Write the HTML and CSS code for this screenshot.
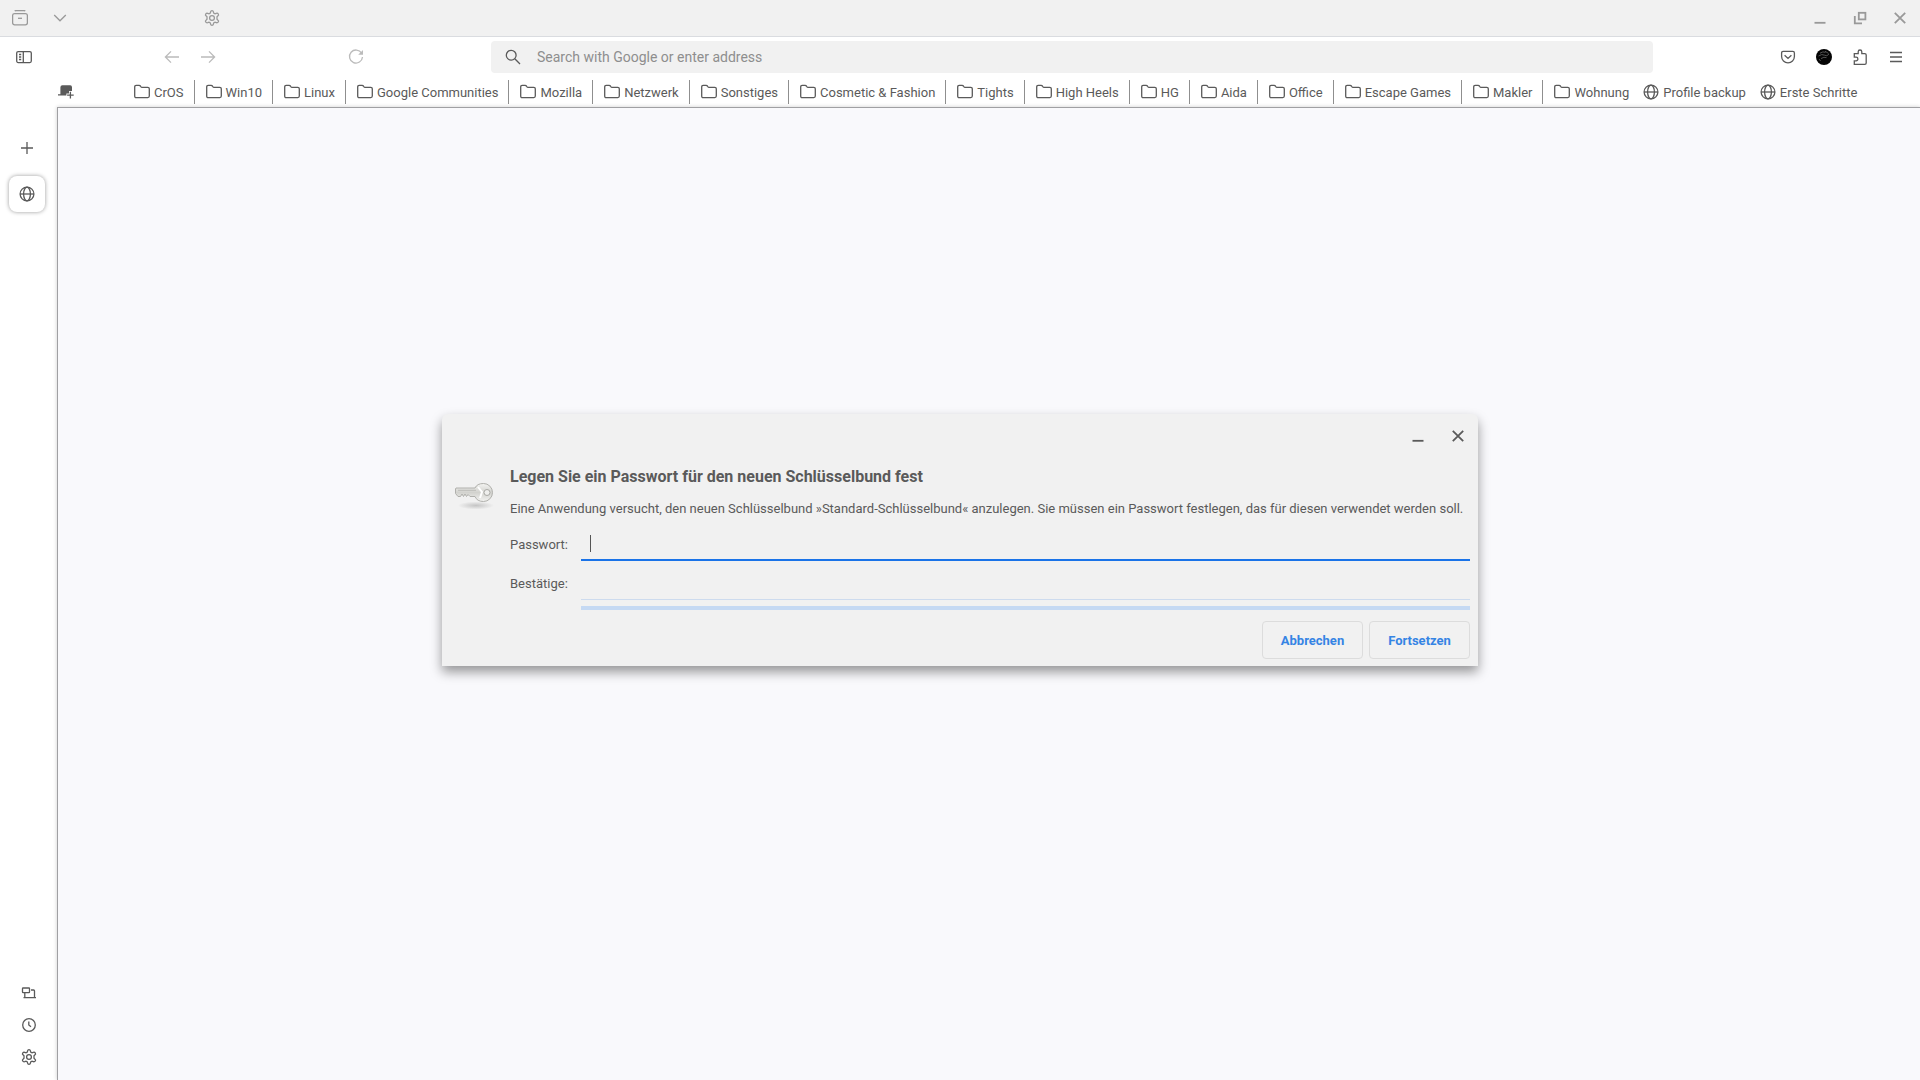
FILE: index.html
```html
<!DOCTYPE html>
<html lang="de">
<head>
    <meta charset="UTF-8">
    <title>Neuer Schlüsselbund</title>
    <meta name="viewport" content="width=device-width, initial-scale=1.0">
    <link rel="stylesheet" href="styles.css">
</head>
<body>
<!-- Shared icons -->
<svg class="sprite" xmlns="http://www.w3.org/2000/svg">
    <symbol id="folder" viewBox="0 0 16 16">
        <path d="M.7 12.1V2.9Q.7 1.3 2.2 1.3H5.1Q5.9 1.3 6.4 2L7 2.9Q7.3 3.3 7.9 3.3H13.8Q15.3 3.3 15.3 4.8V12.1Q15.3 13.6 13.8 13.6H2.2Q.7 13.6 .7 12.1Z" />
    </symbol>
    <symbol id="globe" viewBox="0 0 16 16">
        <circle cx="8" cy="8" r="6.9" />
        <ellipse cx="8" cy="8" rx="3.4" ry="6.9" />
        <path d="M1 8H15" />
    </symbol>
    <symbol id="gear" viewBox="0 0 16 16">
        <path d="M6.6 1.8Q6.8.7 8 .7T9.4 1.8L9.7 3.1 11 3.8 12.3 3.3Q13.6 2.9 14.3 4T14 5.8L13 6.7V9.3L14 10.2Q15 11 14.3 12T12.3 12.7L11 12.2 9.7 12.9 9.4 14.2Q9.2 15.3 8 15.3T6.6 14.2L6.3 12.9 5 12.2 3.7 12.7Q2.4 13.1 1.7 12T2 10.2L3 9.3V6.7L2 5.8Q1 5 1.7 4T3.7 3.3L5 3.8 6.3 3.1Z" />
        <circle cx="8" cy="8" r="2.4" />
    </symbol>
    <symbol id="minimize" viewBox="0 0 16 16">
        <path d="M2.5 12.8H13.5" />
    </symbol>
    <symbol id="close" viewBox="0 0 16 16">
        <path d="M2.8 2.8 13.2 13.2M13.2 2.8 2.8 13.2" />
    </symbol>
</svg>

<header class="titlebar">
    <button class="tool" aria-label="Firefox View">
        <svg class="icon" viewBox="0 0 16 16"><path d="M2.8 1.2Q3.2.6 4 .6H12Q12.8.6 13.2 1.2" /><rect x=".6" y="3.6" width="14.8" height="11.2" rx="2" /><path d="M6 8.3H10" /></svg>
    </button>
    <button class="tool" aria-label="List all tabs">
        <svg class="icon" viewBox="0 0 16 16"><path d="M2.2 5 8 10.8 13.8 5" /></svg>
    </button>
    <span class="spring"></span>
    <button class="tool" aria-label="Settings">
        <svg class="icon"><use href="#gear" /></svg>
    </button>
    <div class="window-controls">
        <button class="tool" aria-label="Minimize"><svg class="icon bold"><use href="#minimize" /></svg></button>
        <button class="tool" aria-label="Restore">
            <svg class="icon bold" viewBox="0 0 16 16"><rect x="6.8" y="2.8" width="6.6" height="6.6" /><path d="M2.8 6V13.3H10" /></svg>
        </button>
        <button class="tool" aria-label="Close"><svg class="icon bold"><use href="#close" /></svg></button>
    </div>
</header>

<div class="toolbar">
    <button class="tool" aria-label="Sidebar">
        <svg class="icon" viewBox="0 0 16 16"><rect x=".7" y="2.6" width="14.6" height="11" rx="1.5" /><path d="M7.3 2.6V13.6M3 5.5H5.2M3 8H5.2M3 10.5H5.2" /></svg>
    </button>
    <span class="spring"></span>
    <button class="tool" aria-label="Back" disabled>
        <svg class="icon" viewBox="0 0 16 16"><path d="M1.5 8H15M7 2.4 1.4 8 7 13.6" /></svg>
    </button>
    <button class="tool" aria-label="Forward" disabled>
        <svg class="icon" viewBox="0 0 16 16"><path d="M14.5 8H1M9 2.4 14.6 8 9 13.6" /></svg>
    </button>
    <span class="spring"></span>
    <button class="tool" aria-label="Reload" disabled>
        <svg class="icon" viewBox="0 0 16 16"><path d="M13.6 4.2A6.5 6.5 0 1 0 14.5 8" /><path class="solid" d="M15 1V5.8H10.2Z" /></svg>
    </button>
    <label class="urlbar">
        <svg class="icon" viewBox="0 0 16 16"><circle cx="6.2" cy="6.2" r="4.9" /><path d="M9.8 9.8 15 15" /></svg>
        <input type="text" aria-label="Address" placeholder="Search with Google or enter address">
    </label>
    <button class="tool" aria-label="Pocket">
        <svg class="icon" viewBox="0 0 16 16"><path d="M1.6 3.9Q1.6 2.3 3.2 2.3H12.8Q14.4 2.3 14.4 3.9V7.6A6.4 6.2 0 0 1 1.6 7.6ZM4.6 6.2 8 9.4 11.4 6.2" /></svg>
    </button>
    <button class="tool" aria-label="Account">
        <svg class="avatar" viewBox="0 0 16 16"><circle cx="8" cy="8" r="8" /><path d="M4 4.2Q7 2 9.5 3.4M2.5 7Q6 4.5 8.5 6.2T13 5M5 9.6Q8 7.5 10.5 8.6M9 2.2 12.5 4.4M3 10 4.6 12" /></svg>
    </button>
    <button class="tool" aria-label="Extensions">
        <svg class="icon" viewBox="0 0 16 16"><path d="M2.3 15.3V11.8H4.1A1.7 1.7 0 0 0 4.1 8.2H2.3V4.7H6.2V2.8A1.8 1.8 0 0 1 9.8 2.8V4.7H12.8Q14.2 4.7 14.2 6.1V13.9Q14.2 15.3 12.8 15.3Z" /></svg>
    </button>
    <button class="tool" aria-label="Menu">
        <svg class="icon" viewBox="0 0 16 16"><path d="M2 3.5H14M2 8H14M2 12.5H14" /></svg>
    </button>
</div>

<nav class="bookmarks">
    <button class="add-page" aria-label="Add page">
        <svg class="icon" viewBox="0 0 16 16"><path class="solid" d="M2.4 3.2Q2.4 1.2 4.4 1.2H12.2Q14 1.2 14 3.2V7H11V9.4H8.4V11.4H0V10.2H2.4Z" /><path d="M12.4 7.8V14.4M9.1 11.1H15.7" /></svg>
    </button>
    <a class="bookmark" href="#"><svg class="icon"><use href="#folder" /></svg>CrOS</a>
    <a class="bookmark" href="#"><svg class="icon"><use href="#folder" /></svg>Win10</a>
    <a class="bookmark" href="#"><svg class="icon"><use href="#folder" /></svg>Linux</a>
    <a class="bookmark" href="#"><svg class="icon"><use href="#folder" /></svg>Google Communities</a>
    <a class="bookmark" href="#"><svg class="icon"><use href="#folder" /></svg>Mozilla</a>
    <a class="bookmark" href="#"><svg class="icon"><use href="#folder" /></svg>Netzwerk</a>
    <a class="bookmark" href="#"><svg class="icon"><use href="#folder" /></svg>Sonstiges</a>
    <a class="bookmark" href="#"><svg class="icon"><use href="#folder" /></svg>Cosmetic &amp; Fashion</a>
    <a class="bookmark" href="#"><svg class="icon"><use href="#folder" /></svg>Tights</a>
    <a class="bookmark" href="#"><svg class="icon"><use href="#folder" /></svg>High Heels</a>
    <a class="bookmark" href="#"><svg class="icon"><use href="#folder" /></svg>HG</a>
    <a class="bookmark" href="#"><svg class="icon"><use href="#folder" /></svg>Aida</a>
    <a class="bookmark" href="#"><svg class="icon"><use href="#folder" /></svg>Office</a>
    <a class="bookmark" href="#"><svg class="icon"><use href="#folder" /></svg>Escape Games</a>
    <a class="bookmark" href="#"><svg class="icon"><use href="#folder" /></svg>Makler</a>
    <a class="bookmark last" href="#"><svg class="icon"><use href="#folder" /></svg>Wohnung</a>
    <a class="bookmark page" href="#"><svg class="icon"><use href="#globe" /></svg>Profile backup</a>
    <a class="bookmark page" href="#"><svg class="icon"><use href="#globe" /></svg>Erste Schritte</a>
</nav>

<div class="browser">
    <aside class="sidebar">
        <div class="tabs">
            <button class="side-button" aria-label="New tab">
                <svg class="icon" viewBox="0 0 16 16"><path d="M8 2V14M2 8H14" /></svg>
            </button>
            <button class="side-button tab" aria-label="Current tab">
                <svg class="icon"><use href="#globe" /></svg>
            </button>
        </div>
        <div class="side-tools">
            <button class="side-button" aria-label="Synced tabs">
                <svg class="icon" viewBox="0 0 16 16"><rect x="1.5" y="3" width="7" height="4.6" rx=".6" /><path d="M3.8 7.6V12.4M10 5H12.6Q13.5 5 13.5 5.9V12.4M2.5 12.7H15" /></svg>
            </button>
            <button class="side-button" aria-label="History">
                <svg class="icon" viewBox="0 0 16 16"><circle cx="8" cy="8" r="6.3" /><path d="M7.8 4.5V8L10 9.7" /></svg>
            </button>
            <button class="side-button" aria-label="Customize sidebar">
                <svg class="icon"><use href="#gear" /></svg>
            </button>
        </div>
    </aside>
    <main class="content"></main>
</div>

<!-- Keyring prompt -->
<div class="overlay">
    <form class="dialog" role="dialog" aria-labelledby="dialog-title">
        <div class="dialog-bar">
            <button type="button" class="dialog-control" aria-label="Minimize"><svg class="icon bold"><use href="#minimize" /></svg></button>
            <button type="button" class="dialog-control" aria-label="Close"><svg class="icon bold"><use href="#close" /></svg></button>
        </div>
        <div class="dialog-body">
            <svg class="key" viewBox="0 0 40 32">
                <defs>
                    <linearGradient id="metal" x1="0" y1="0" x2="0" y2="1">
                        <stop offset="0" stop-color="#f4f4f2" />
                        <stop offset=".5" stop-color="#d2d2ce" />
                        <stop offset="1" stop-color="#f3f3f1" />
                    </linearGradient>
                    <radialGradient id="shade">
                        <stop offset="0" stop-color="#c4c4c4" />
                        <stop offset="1" stop-color="#f1f1f1" />
                    </radialGradient>
                </defs>
                <ellipse cx="22" cy="25.5" rx="18" ry="4" fill="url(#shade)" />
                <path d="M2 8H21Q23 3.5 29.5 3.5A9 9 0 0 1 29.5 21.5Q23 21.5 21 16.5H16L14 14.5 12.5 16.5 11 14 9.5 16.5 8 14 6.5 16.5H4L1.5 13.5V9Z" fill="url(#metal)" stroke="#b0b0ac" />
                <path d="M4 10.3H22" stroke="#bcbcb8" />
                <circle cx="33" cy="12.5" r="3" fill="#efefed" stroke="#aaaaa6" />
                <path d="M24 7 28 12 26 18" fill="none" stroke="#ffffff" stroke-width="2" />
            </svg>
            <div class="dialog-text">
                <h1 id="dialog-title">Legen Sie ein Passwort für den neuen Schlüsselbund fest</h1>
                <p>Eine Anwendung versucht, den neuen Schlüsselbund »Standard-Schlüsselbund« anzulegen. Sie müssen ein Passwort festlegen, das für diesen verwendet werden soll.</p>
                <div class="fields">
                    <label for="password">Passwort:</label>
                    <input type="password" id="password" class="field active">
                    <label for="confirm">Bestätige:</label>
                    <input type="password" id="confirm" class="field">
                    <div class="strength"></div>
                </div>
            </div>
        </div>
        <div class="dialog-actions">
            <button type="button">Abbrechen</button>
            <button type="button">Fortsetzen</button>
        </div>
    </form>
</div>
</body>
</html>
```

FILE: styles.css
```css
* {
    box-sizing: border-box;
}

body {
    margin: 0;
    height: 100vh;
    display: flex;
    flex-direction: column;
    background: #ffffff;
    color: #5a5a5a;
    font-family: Roboto, "Liberation Sans", sans-serif;
    font-size: 13px;
    overflow: hidden;
}

button {
    border: 0;
    padding: 0;
    background: none;
    color: inherit;
    font: inherit;
}

.sprite {
    display: none;
}

/* Icons are drawn as strokes in the text colour */
.icon {
    display: block;
    flex: none;
    width: 16px;
    height: 16px;
    fill: none;
    stroke: currentColor;
    stroke-width: 1.3;
}

.icon.bold {
    stroke-width: 1.8;
}

.icon .solid {
    fill: currentColor;
    stroke: none;
}

/* Title bar */
.titlebar {
    display: flex;
    align-items: center;
    height: 37px;
    padding: 0 2px;
    background: #f1f1f1;
    border-bottom: 1px solid #dadce0;
    color: #999999;
}

.titlebar .tool + .tool {
    margin-left: 4px;
}

.tool {
    display: flex;
    align-items: center;
    justify-content: center;
    flex: none;
    width: 36px;
    height: 32px;
}

.tool:disabled {
    color: #bbbbbb;
}

.spring {
    flex: 0 1 112px;
}

.titlebar .spring {
    flex-basis: 116px;
}

.window-controls {
    display: flex;
    margin-left: auto;
}

/* Navigation toolbar */
.toolbar {
    display: flex;
    align-items: center;
    height: 40px;
    padding: 0 6px;
}

.urlbar {
    display: flex;
    flex: 1;
    align-items: center;
    gap: 16px;
    height: 32px;
    margin: 0 117px;
    padding: 0 14px;
    border-radius: 4px;
    background: #f1f1f1;
}

.urlbar input {
    flex: 1;
    border: 0;
    padding: 0;
    outline: 0;
    background: none;
    font: inherit;
    font-size: 14px;
}

.urlbar input::placeholder {
    color: #8e8e8e;
    opacity: 1;
}

.avatar {
    width: 16px;
    height: 16px;
    fill: #050505;
}

.avatar path {
    fill: none;
    stroke: #666666;
    stroke-width: .8;
}

/* Bookmarks */
.bookmarks {
    display: flex;
    align-items: center;
    height: 30px;
    padding-left: 58px;
}

.add-page {
    margin-right: 60px;
}

.bookmark {
    display: flex;
    align-items: center;
    gap: 4px;
    height: 24px;
    margin-right: 11px;
    padding-right: 10px;
    border-right: 1px solid #8f8f8f;
    color: inherit;
    text-decoration: none;
    white-space: nowrap;
}

.bookmark.last,
.bookmark.page {
    margin-right: 14px;
    padding-right: 0;
    border-right: 0;
}

/* Sidebar and page */
.browser {
    display: flex;
    flex: 1;
}

.sidebar {
    display: flex;
    flex-direction: column;
    justify-content: space-between;
    width: 57px;
    padding: 23px 8px 7px 9px;
}

.side-button {
    display: flex;
    align-items: center;
    justify-content: center;
    width: 36px;
    height: 36px;
}

.tab {
    margin-top: 10px;
    border-radius: 8px;
    box-shadow: 0 0 4px rgba(0, 0, 0, .4);
}

.side-tools .side-button {
    width: 40px;
    height: 32px;
}

.content {
    flex: 1;
    border-top: 1px solid #a0a0a3;
    border-left: 1px solid #a0a0a3;
    background: #f9f9fc;
    box-shadow: 0 0 4px rgba(0, 0, 0, .2);
}

/* Keyring prompt */
.overlay {
    position: absolute;
    inset: 0;
    display: flex;
    align-items: center;
    justify-content: center;
}

.dialog {
    width: 1036px;
    max-width: 100%;
    padding: 0 8px 7px 12px;
    border-radius: 6px 6px 0 0;
    background: #f1f1f1;
    box-shadow: 0 6px 12px rgba(0, 0, 0, .4);
}

.dialog-bar {
    display: flex;
    justify-content: flex-end;
    gap: 24px;
    padding: 14px 4px 17px 0;
}

.dialog-body {
    display: flex;
    gap: 16px;
}

.key {
    flex: none;
    width: 40px;
    height: 32px;
    margin-top: 19px;
}

.dialog-text {
    flex: 1;
}

.dialog-text h1 {
    margin: 0;
    padding: 6px 0 13px;
    font-size: 16px;
    line-height: 20px;
}

.dialog-text p {
    margin: 0 0 10px;
    line-height: 18px;
}

.fields {
    display: grid;
    grid-template-columns: 71px 1fr;
    row-gap: 6px;
}

.fields label {
    line-height: 33px;
}

.field {
    height: 33px;
    border: 0;
    border-bottom: 1px solid #cddbee;
    padding: 0 8px;
    outline: 0;
    background: none;
}

/* Focused field shows its text cursor */
.field.active {
    border-bottom: 2px solid #1a73e8;
    background: linear-gradient(#555555, #555555) 9px 7px / 1px 17px no-repeat;
}

.strength {
    grid-column: 2;
    height: 4px;
    background: #c5d9f3;
}

.dialog-actions {
    display: flex;
    justify-content: flex-end;
    gap: 6px;
    padding-top: 11px;
}

.dialog-actions button {
    width: 101px;
    height: 38px;
    border: 1px solid #dcdcdc;
    border-radius: 4px;
    color: #3584e4;
    font-weight: 700;
}
```
